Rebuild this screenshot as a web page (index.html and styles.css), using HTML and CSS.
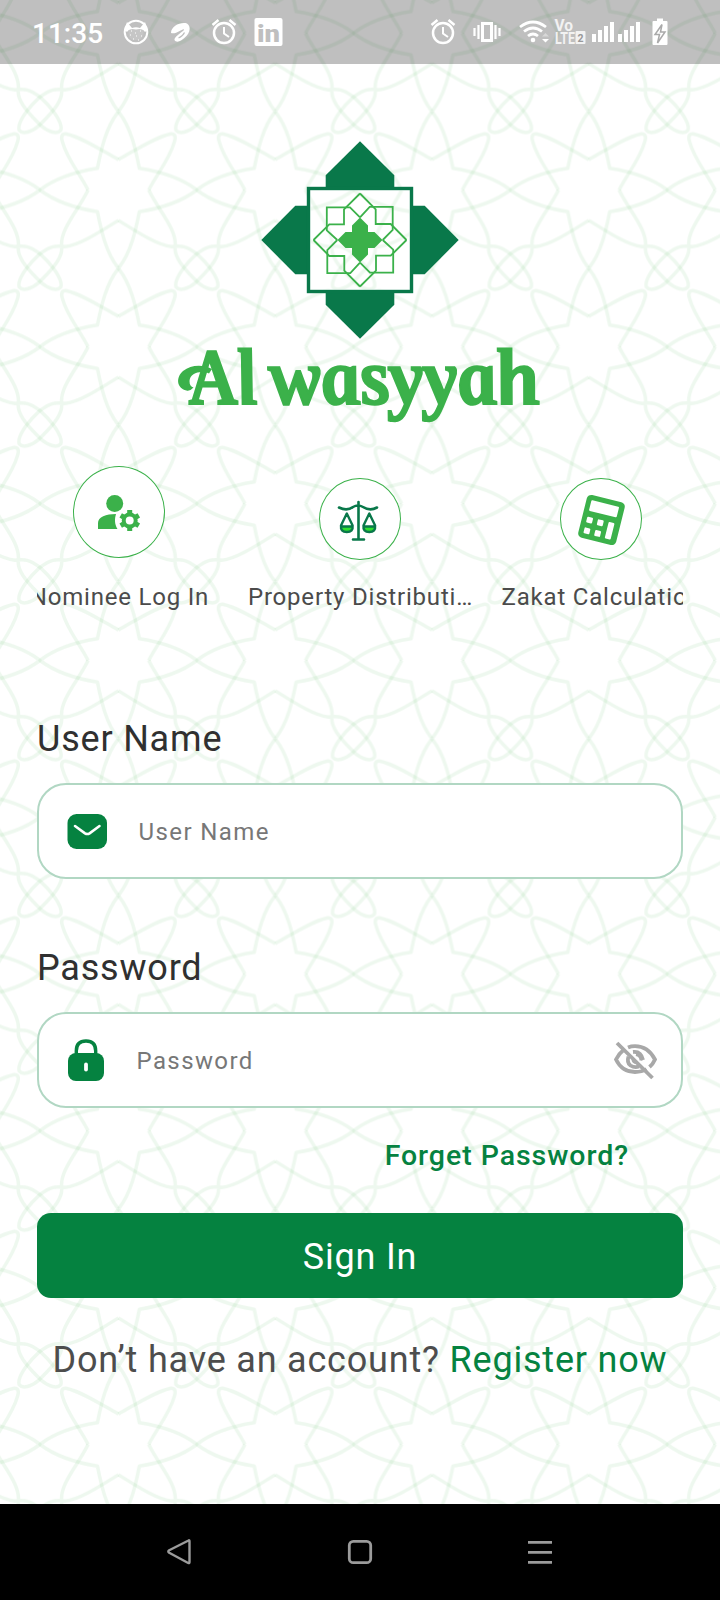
FILE: index.html
```html
<!DOCTYPE html>
<html lang="en">
<head>
<meta charset="utf-8">
<title>Al Wasyyah</title>
<link rel="stylesheet" href="styles.css">
</head>
<body>
<svg class="backdrop" width="720" height="1504" aria-hidden="true">
  <defs>
    <g id="star" fill="none" stroke="#3bae49" stroke-opacity=".085" stroke-width="10.5" stroke-linejoin="round">
      <g id="half">
        <path d="M0-91 C55-122 110-158 155-168 C170-170 173-160 168-145 C155-95 118-52 91 0"/>
        <path d="M0-235 C38-188 52-120 63-65 C120-56 190-35 235 0 C190 35 120 56 63 65 C52 120 38 188 0 235"/>
        <path d="M91 0 C118 58 178 120 170 172 C168 200 190 230 236 275 C262 299 288 303 297 292 C305 275 280 232 236 192 C200 164 185 168 160 170 C115 165 50 122 0 91"/>
      </g>
      <use href="#half" transform="scale(-1 1)"/>
    </g>
    <pattern id="lattice" width="470.4" height="470.4" patternUnits="userSpaceOnUse" patternTransform="translate(40 111.6) scale(.33333)">
      <use href="#star" x="235.2" y="235.2"/>
      <use href="#star" x="705.6" y="235.2"/>
      <use href="#star" x="-235.2" y="235.2"/>
      <use href="#star" x="235.2" y="-235.2"/>
      <use href="#star" x="705.6" y="-235.2"/>
      <use href="#star" x="-235.2" y="-235.2"/>
    </pattern>
  </defs>
  <rect width="720" height="1504" fill="url(#lattice)"/>
</svg>

<header class="status">
  <span class="time">11:35</span>
  <svg class="status-left" width="166" height="64" viewBox="120 0 166 64" fill="none" stroke="#fff">
    <circle cx="136" cy="32" r="11.3" stroke-width="2"/>
    <path d="M127 22l5 6q4-1.500 8 0l5-6 2.500 8-2.500 2q-2-3-4-2-5 2-10 0-2-1-4 2l-2.500-2z" fill="#fff" stroke="none"/>
    <path d="M128.500 31q-1 9 7.500 9 8.500 0 7.500-9-1.500-3-7.500-1.500-6-1.500-7.500 1.500z" fill="#c6c6c6" stroke="none"/>
    <path d="M130 35h1m4-2h1m5 3h1m-9 3h1m4 1h1m-3-4h1m-6-5h1m8 0h1" stroke="#fff" stroke-width="1.200"/>
    <path d="M171 33C171 26 181 21.500 187 23.500C192 27 190 35 181 40.500C177 43 173 41 175 38C178 34 184 31 184 29.500C183 28 176 35 171 33z" fill="#fff" stroke="none"/>
    <path d="M178.500 38q4.500-2 6-5.500" stroke="#bfbfbf" stroke-width="1.200"/>
    <g id="alarm" stroke-width="2.500">
      <circle cx="224" cy="33" r="10"/>
      <path d="M212.500 25l6-5M235.500 25l-6-5"/>
      <path d="M224 27v6.500l5 3.500" stroke-width="2"/>
    </g>
    <rect x="254.500" y="18" width="28" height="28" rx="2" fill="#fff" stroke="none"/>
    <text class="in" x="257" y="41.500" textLength="23" lengthAdjust="spacingAndGlyphs">in</text>
  </svg>
  <svg class="status-right" width="250" height="64" viewBox="425 0 250 64" fill="none" stroke="#fff">
    <use href="#alarm" x="219"/>
    <rect x="482.500" y="23.500" width="9" height="17" stroke-width="3"/>
    <path d="M478.500 25v14M474.500 28v8M495.500 25v14M499.500 28v8" stroke-width="2.200"/>
    <path d="M520 27q13-10 26 0M524 31.500q9-7 18 0M528 36q5-4 10 0" stroke-width="2.800"/>
    <circle cx="533" cy="40" r="2.300" fill="#fff" stroke="none"/>
    <path d="M542 39h7l-3.500 3.500z" fill="#fff" stroke="none"/>
    <path d="M542 36.500h7l-3.500-3.500z" fill="#d8d8d8" stroke="none"/>
    <text class="lte" x="554.500" y="31" textLength="18.500" lengthAdjust="spacingAndGlyphs">Vo</text>
    <text class="lte" x="555" y="43.800" textLength="20" lengthAdjust="spacingAndGlyphs">LTE</text>
    <rect x="575.500" y="31" width="10" height="13" rx="1" fill="#f2f2f2" stroke="none"/>
    <text class="sim" x="577.500" y="41.500">2</text>
    <path d="M594 42v-8M600 42v-12M606 42v-16M612 42v-20M620 42v-8M626 42v-12M632 42v-16M638 42v-20" stroke-width="4"/>
    <path d="M653.500 21h3.500v-2.500h6v2.500h3.500q1 0 1 1v22q0 1-1 1h-13q-1 0-1-1v-22q0-1 1-1z" fill="#fff" stroke="none"/>
    <path d="M662 24.500l-7 10h4.500l-2 8.500 7.500-11h-4.500z" fill="#fff" stroke="#aaa" stroke-width="1.500"/>
  </svg>
</header>

<main class="page">
  <svg class="logo" width="370" height="290" viewBox="175 140 370 290">
    <g fill="#09784a">
      <path id="arm" d="M360 141.300L394.300 175.300V190H325.700V175.300z"/>
      <use href="#arm" transform="rotate(90 360 240)"/>
      <use href="#arm" transform="rotate(180 360 240)"/>
      <use href="#arm" transform="rotate(270 360 240)"/>
    </g>
    <rect x="308.500" y="188.500" width="103" height="103" fill="#fff" stroke="#09784a" stroke-width="3.400"/>
    <rect x="310.500" y="190.500" width="99" height="99" fill="url(#lattice)"/>
    <g fill="none" stroke="#3bb14a" stroke-width="1.800">
      <g id="quarter">
        <path d="M360 193.500L344 209.300V224.300H329.300L313.500 240"/>
        <path d="M360 217.300L350 207.300H326.800V230.300L337.300 240"/>
      </g>
      <use href="#quarter" transform="rotate(90 360 240)"/>
      <use href="#quarter" transform="rotate(180 360 240)"/>
      <use href="#quarter" transform="rotate(270 360 240)"/>
    </g>
    <path fill="#3bb14a" d="M360 217.500L368 225.500V232H374.500L382.500 240L374.500 248H368V254.500L360 262.500L352 254.500V248H345.500L337.500 240L345.500 232H352V225.500z"/>
    <g transform="translate(0 404) skewX(10)">
      <text class="wordmark"><tspan x="193" y="0" textLength="68" lengthAdjust="spacingAndGlyphs">Al</tspan> <tspan x="274" y="0" textLength="269" lengthAdjust="spacingAndGlyphs">wasyyah</tspan></text>
    </g>
    <path d="M186.500 390.500C176 388 176 377 183 371C191 365 202 364 212 369L209 373.500C201 370 190 373 189.500 381C189.500 385 191 387 193.500 387.500Q190 391.500 186.500 390.500z" fill="#3bb14a"/>
  </svg>

  <nav class="shortcuts">
    <a class="shortcut">
      <span class="disc disc-large">
        <svg width="92" height="92" viewBox="73 466 92 92" fill="#3bb14a">
          <circle cx="114.700" cy="503.500" r="8.500"/>
          <path d="M98 529v-6c0-6 8-9 18-9-1.500 5-1.500 10 1.500 15z"/>
          <circle cx="129.700" cy="520.500" r="6" fill="none" stroke="#3bb14a" stroke-width="4"/>
          <path d="M129.700 513.500v-3.500M129.700 527.500v3.500M123.500 517l-2.800-1.600M136 524l2.800 1.600M123.500 524l-2.800 1.600M136 517l2.800-1.600" stroke="#3bb14a" stroke-width="5"/>
        </svg>
      </span>
      <span class="caption">Nominee Log In</span>
    </a>
    <a class="shortcut">
      <span class="disc">
        <svg width="82" height="82" viewBox="319 478 82 82" fill="none" stroke="#09784a" stroke-width="2.600" stroke-linecap="round">
          <path d="M358.500 502v37M353 539.500h11M339 507.500q8 4 14-.5 5-3 10 0 7 4.500 14 .5"/>
          <g id="pan"><path d="M341 527h11q0 5-5.500 5-5.500 0-5.500-5z" fill="#2fe02f" stroke="none"/><path d="M346.800 513.500L341 525.500q-.8 6.500 5.800 6.500 6.600 0 5.800-6.500zM341 526.500h11.500" stroke-width="2.400" stroke-linejoin="round"/></g>
          <use href="#pan" x="22.500"/>
        </svg>
      </span>
      <span class="caption">Property Distributi…</span>
    </a>
    <a class="shortcut">
      <span class="disc">
        <svg width="82" height="82" viewBox="560 478 82 82">
          <g transform="rotate(14 601.500 520)" fill="#fff">
            <rect x="582" y="498" width="39" height="44" rx="4.500" fill="#3bb14a"/>
            <rect x="587" y="503" width="28.500" height="11" rx="1"/>
            <rect x="587" y="520" width="6" height="6" rx="1"/>
            <rect x="598" y="520" width="6" height="6" rx="1"/>
            <rect x="587" y="531" width="6" height="6" rx="1"/>
            <rect x="598" y="531" width="6" height="6" rx="1"/>
            <rect x="609" y="520" width="6" height="17" rx="1"/>
          </g>
        </svg>
      </span>
      <span class="caption">Zakat Calculation</span>
    </a>
  </nav>

  <form class="login">
    <label class="label">User Name</label>
    <div class="field">
      <svg class="field-icon" width="40" height="44" viewBox="67 808 40 44">
        <rect x="67.500" y="813" width="39.500" height="35" rx="9" fill="#058240"/>
        <path d="M75 825l10 7.300q2.300 1.400 4.600 0l9.900-7.300" fill="none" stroke="#fff" stroke-width="2.600" stroke-linecap="round"/>
      </svg>
      <span class="hint hint-user">User Name</span>
    </div>
    <label class="label label-second">Password</label>
    <div class="field">
      <svg class="field-icon" width="40" height="44" viewBox="67 1038 40 44">
        <rect x="68" y="1053" width="36" height="28" rx="8" fill="#058240"/>
        <path d="M76.300 1055v-4q0-10 9.700-10t9.700 10v4" fill="none" stroke="#058240" stroke-width="3.400"/>
        <path d="M86 1064.500v5" stroke="#fff" stroke-width="3.800" stroke-linecap="round"/>
      </svg>
      <span class="hint">Password</span>
      <svg class="eye" width="46" height="42" viewBox="612 1038.500 46 42" fill="none" stroke="#a8a8a8" stroke-width="3.800">
        <path d="M623 1050q-4 3-7 9 6 12.500 19 12.500 7 0 11.500-3M628 1047q3-1.300 7-1.300 13 0 20 13.300-2 4.500-5.500 7.500"/>
        <path d="M628.500 1056q-2 6 2 9 4 2.500 8.500 1M633 1051.500q8-1 10 8"/>
        <path d="M632.500 1059q0 3 4.500 4" stroke-width="2"/>
        <path d="M636 1054q5 1 5 6" stroke-width="3"/>
        <path d="M617 1042.500l35.500 35"/>
      </svg>
    </div>
    <a class="forgot">Forget Password?</a>
    <button class="submit" type="button">Sign In</button>
    <p class="register">Don’t have an account? <a class="register-link">Register now</a></p>
  </form>
</main>

<footer class="keys">
  <svg width="720" height="96" viewBox="0 1504 720 96" fill="none" stroke="#9b9b9b" stroke-width="2.800">
    <path d="M188.500 1540.500q1-.6 1 1v20.500q0 1.600-1.300 1l-19-10.200q-1.800-1.300 0-2.600z" stroke-linejoin="round" stroke-width="2.400"/>
    <rect x="349.300" y="1541.300" width="21.400" height="21.400" rx="4"/>
    <path d="M528 1542.300h24M528 1552.300h24M528 1562.300h24"/>
  </svg>
</footer>
</body>
</html>
```

FILE: styles.css
```css
* { box-sizing: border-box; }

body {
  margin: 0;
  width: 720px;
  height: 1600px;
  display: flex;
  flex-direction: column;
  overflow: hidden;
  background: #fff;
  font-family: Roboto, "Liberation Sans", sans-serif;
}

svg { display: block; flex: none; }

.backdrop { position: absolute; top: 0; left: 0; z-index: -1; }

.status {
  height: 64px;
  flex: none;
  display: flex;
  align-items: center;
  padding: 0 45px 0 32px;
  background: rgba(0, 0, 0, .25);
}
.time { width: 88px; font-size: 28px; font-weight: 500; line-height: 32px; color: #fff; padding-top: 3px; }
.status-right { margin-left: auto; }
.in { font: 900 24px Roboto, sans-serif; fill: #bfbfbf; stroke: none; }
.lte { font: 700 16px Roboto, sans-serif; fill: #f2f2f2; stroke: none; }
.sim { font: 700 10.5px Roboto, sans-serif; fill: #999; stroke: none; }

.page {
  height: 1440px;
  flex: none;
  display: flex;
  flex-direction: column;
  padding: 76px 37px 0;
}
.logo { align-self: center; overflow: visible; }
.wordmark {
  font: italic 700 80px "Liberation Serif", serif;
  fill: #3bb14a;
  stroke: #3bb14a;
  stroke-width: 2px;
}

.shortcuts {
  display: flex;
  justify-content: center;
  height: 176px;
  width: 646px;
  margin-top: 8px;
  overflow: hidden;
}
.shortcut {
  width: 241px;
  flex: none;
  height: 175px;
  display: flex;
  flex-direction: column;
  align-items: center;
  justify-content: flex-end;
}
.disc {
  width: 82px;
  height: 82px;
  border-radius: 50%;
  background: #fff;
  box-shadow: inset 0 0 0 1px #3bb14a;
}
.disc-large { width: 92px; height: 92px; margin-bottom: 2px; }
.caption {
  margin-top: 23px;
  margin-bottom: 2px;
  padding-left: 1px;
  font-size: 24px;
  line-height: 28px;
  letter-spacing: .8px;
  color: #4b4b4b;
  white-space: nowrap;
}

.login { display: flex; flex-direction: column; margin-top: 104px; }
.label { font-size: 36px; line-height: 42px; letter-spacing: .8px; color: #303030; }
.label-second { margin-top: 68px; }
.field {
  height: 96px;
  width: 646px;
  margin-top: 23px;
  display: flex;
  align-items: center;
  padding: 0 23px 0 28px;
  border: 2px solid #b1d7c3;
  border-radius: 29px;
  background: #fff;
}
.hint { margin-left: 29.500px; padding-top: 2px; font-size: 24px; letter-spacing: 1.400px; color: #777; }
.hint-user { margin-left: 31.500px; }
.eye { margin-left: auto; }
.forgot {
  align-self: flex-end;
  margin: 31px 54px 0 0;
  font-size: 28.500px;
  font-weight: 500;
  line-height: 33px;
  letter-spacing: .95px;
  color: #058240;
}
.submit {
  height: 85px;
  width: 646px;
  margin: 41px 0 0;
  padding: 2px 0 0;
  border: 0;
  border-radius: 14px;
  background: #058240;
  color: #fff;
  font: 36px/42px Roboto, sans-serif;
  letter-spacing: .8px;
}
.register {
  margin: 41px 0 0;
  text-align: center;
  font-size: 36px;
  line-height: 42px;
  letter-spacing: .8px;
  white-space: nowrap;
  color: #4d4d4d;
}
.register-link { color: #058240; }

.keys { height: 96px; flex: none; background: #000; }
```
